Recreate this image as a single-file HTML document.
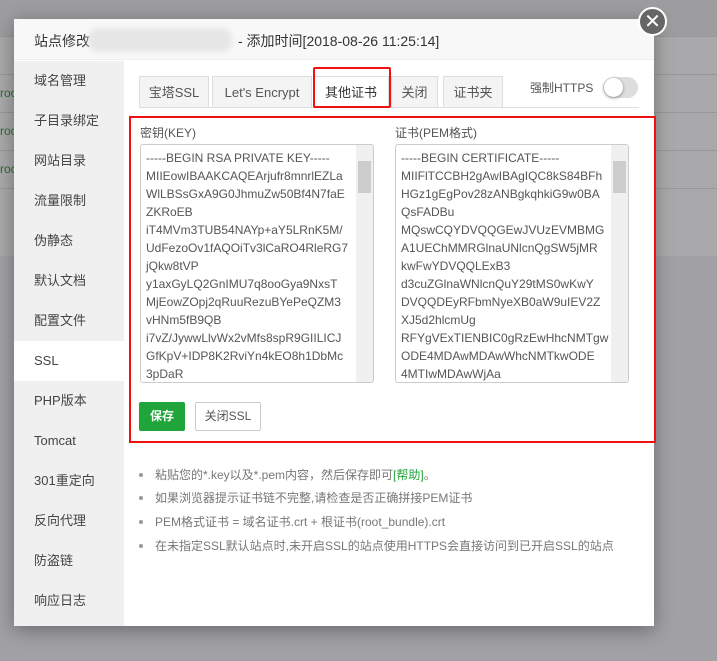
<!DOCTYPE html>
<html><head><meta charset="utf-8"><style>
*{box-sizing:border-box;margin:0;padding:0}
body{width:717px;height:661px;overflow:hidden;position:relative;background:#a1a1a5;font-family:"Liberation Sans","Noto Sans CJK SC",sans-serif;font-size:12px;color:#555}
.abs{position:absolute}
.bgtop{left:0;top:0;width:717px;height:36px;background:#9d9d9f}
.bgmid{left:0;top:36px;width:717px;height:220px;background:#a9a9ab}
.ln{left:0;width:717px;height:1px;background:#979799}
.roc{left:0;color:#2d6e2d;font-size:12px}
.modal{left:14px;top:19px;width:640px;height:607px;background:#fff;box-shadow:0 4px 18px rgba(0,0,0,.35)}
.hd{left:0;top:0;width:640px;height:41px;background:#f8f8f8;border-bottom:1px solid #eee;font-size:14px;color:#333;padding:12px 0 0 20px}
.blur{left:74px;top:9px;width:144px;height:24px;background:#e6e6e6;border-radius:10px;filter:blur(3px)}
.side{left:0;top:42px;width:110px;height:565px;background:#f0f0f0}
.it{left:20px;font-size:13px;color:#444;line-height:18px;height:18px}
.tab{top:57px;height:31px;background:#f4f4f4;border:1px solid #ddd;border-bottom:none;font-size:13px;color:#555;text-align:center;line-height:31px}
.ta{top:144px;width:234px;height:239px;border:1px solid #ccc;border-radius:3px;background:#fff;overflow:hidden}
.ta pre{font-family:"Liberation Sans",sans-serif;font-size:12px;line-height:18px;color:#555;padding:4px 0 0 5px;white-space:pre}
.sb{right:0;top:0;width:17px;height:100%;background:#f0f0f0}
.th{left:2px;top:16px;width:13px;height:32px;background:#cdcdcd}
li{list-style:none;position:absolute;left:155px;font-size:12px;color:#777;line-height:18px}
li:before{content:"";position:absolute;left:-16px;top:7px;width:4px;height:4px;border-radius:2px;background:#999}
</style></head><body>
<div class="abs bgtop"></div><div class="abs bgmid"></div>
<div class="abs ln" style="top:36px"></div><div class="abs ln" style="top:74px"></div><div class="abs ln" style="top:112px"></div><div class="abs ln" style="top:150px"></div><div class="abs ln" style="top:188px"></div>
<div class="abs roc" style="top:86px">roc</div><div class="abs roc" style="top:124px">roc</div><div class="abs roc" style="top:162px">roc</div>
<div class="abs modal">
<div class="abs hd">站点修改<span style="display:inline-block;width:148px"></span>- 添加时间[2018-08-26 11:25:14]</div>
<div class="abs blur"></div>
<div class="abs side"></div>
<div class="abs" style="left:0;top:322px;width:110px;height:40px;background:#fff"></div>
<div class="abs it" style="top:53px">域名管理</div>
<div class="abs it" style="top:93px">子目录绑定</div>
<div class="abs it" style="top:133px">网站目录</div>
<div class="abs it" style="top:173px">流量限制</div>
<div class="abs it" style="top:213px">伪静态</div>
<div class="abs it" style="top:253px">默认文档</div>
<div class="abs it" style="top:293px">配置文件</div>
<div class="abs it" style="top:333px">SSL</div>
<div class="abs it" style="top:373px">PHP版本</div>
<div class="abs it" style="top:413px">Tomcat</div>
<div class="abs it" style="top:453px">301重定向</div>
<div class="abs it" style="top:493px">反向代理</div>
<div class="abs it" style="top:533px">防盗链</div>
<div class="abs it" style="top:573px">响应日志</div>
<div class="abs tab" style="left:125px;width:70px">宝塔SSL</div>
<div class="abs tab" style="left:198px;width:100px">Let's Encrypt</div>
<div class="abs tab" style="left:299px;width:76px;background:#fff;height:32px;color:#333">其他证书</div>
<div class="abs tab" style="left:377px;width:47px">关闭</div>
<div class="abs tab" style="left:429px;width:60px">证书夹</div>
<div class="abs" style="left:125px;top:88px;width:500px;height:1px;background:#ddd"></div>
<div class="abs" style="left:299px;top:48px;width:78px;height:41px;border:2px solid #f01010;border-radius:2px"></div>
<div class="abs" style="left:516px;top:60px;font-size:12px;color:#555">强制HTTPS</div>
<div class="abs" style="left:589px;top:58px;width:35px;height:21px;border-radius:11px;background:#ddd"></div>
<div class="abs" style="left:590px;top:59px;width:19px;height:19px;border-radius:10px;background:#fff;box-shadow:0 1px 3px rgba(0,0,0,.4)"></div>
<div class="abs" style="left:115px;top:97px;width:527px;height:327px;border:2px solid #f01010"></div>
</div>
<div class="abs" style="left:638px;top:7px;width:29px;height:29px;border-radius:50%;background:#666;border:2px solid #fff;color:#fff;font-size:20px;text-align:center;line-height:24px;font-family:'DejaVu Sans',sans-serif">✕</div>
<div class="abs" style="left:140px;top:124px;font-size:12px;color:#555">密钥(KEY)</div>
<div class="abs" style="left:395px;top:124px;font-size:12px;color:#555">证书(PEM格式)</div>
<div class="abs ta" style="left:140px"><pre>-----BEGIN RSA PRIVATE KEY-----
MIIEowIBAAKCAQEArjufr8mnrlEZLa
WlLBSsGxA9G0JhmuZw50Bf4N7faE
ZKRoEB
iT4MVm3TUB54NAYp+aY5LRnK5M/
UdFezoOv1fAQOiTv3lCaRO4RleRG7
jQkw8tVP
y1axGyLQ2GnIMU7q8ooGya9NxsT
MjEowZOpj2qRuuRezuBYePeQZM3
vHNm5fB9QB
i7vZ/JywwLlvWx2vMfs8spR9GIILICJ
GfKpV+IDP8K2RviYn4kEO8h1DbMc
3pDaR</pre><div class="abs sb"><div class="abs th"></div></div></div>
<div class="abs ta" style="left:395px"><pre>-----BEGIN CERTIFICATE-----
MIIFlTCCBH2gAwIBAgIQC8kS84BFh
HGz1gEgPov28zANBgkqhkiG9w0BA
QsFADBu
MQswCQYDVQQGEwJVUzEVMBMG
A1UEChMMRGlnaUNlcnQgSW5jMR
kwFwYDVQQLExB3
d3cuZGlnaWNlcnQuY29tMS0wKwY
DVQQDEyRFbmNyeXB0aW9uIEV2Z
XJ5d2hlcmUg
RFYgVExTIENBIC0gRzEwHhcNMTgw
ODE4MDAwMDAwWhcNMTkwODE
4MTIwMDAwWjAa</pre><div class="abs sb"><div class="abs th"></div></div></div>
<div class="abs" style="left:139px;top:402px;width:46px;height:29px;background:#20a53a;border-radius:2px;color:#fff;font-size:12px;text-align:center;line-height:29px;font-weight:bold">保存</div>
<div class="abs" style="left:195px;top:402px;width:66px;height:29px;border:1px solid #ccc;border-radius:2px;color:#555;font-size:12px;text-align:center;line-height:27px">关闭SSL</div>
<ul>
<li style="top:466px">粘贴您的*.key以及*.pem内容，然后保存即可<span style="color:#20a53a">[帮助]</span>。</li>
<li style="top:489px">如果浏览器提示证书链不完整,请检查是否正确拼接PEM证书</li>
<li style="top:513px">PEM格式证书 = 域名证书.crt + 根证书(root_bundle).crt</li>
<li style="top:537px">在未指定SSL默认站点时,未开启SSL的站点使用HTTPS会直接访问到已开启SSL的站点</li>
</ul>
</body></html>
